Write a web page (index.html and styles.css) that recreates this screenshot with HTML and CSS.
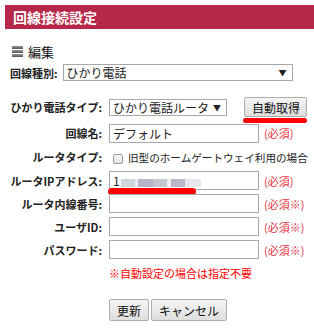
FILE: index.html
```html
<!DOCTYPE html>
<html lang="ja">
<head>
    <meta charset="UTF-8">
    <title>回線接続設定</title>
    <link rel="stylesheet" href="styles.css">
</head>
<body>
<h2 class="title">回線接続設定</h2>

<div class="section">
    <span class="icon"><i></i><i></i><i></i></span>編集
</div>

<div class="line-type">
    <label>回線種別:</label>
    <div class="select wide">ひかり電話<span class="arrow">▼</span></div>
</div>

<table class="form">
    <tr class="first">
        <th>ひかり電話タイプ:</th>
        <td>
            <div class="select small">ひかり電話ルータ<span class="arrow">▼</span></div>
            <span class="auto-wrap"><button type="button" class="btn auto">自動取得</button><span class="mark"></span></span>
        </td>
    </tr>
    <tr class="tall">
        <th>回線名:</th>
        <td><div class="input">デフォルト</div><span class="req">(必須)</span></td>
    </tr>
    <tr class="tall">
        <th>ルータタイプ:</th>
        <td class="check"><span class="box"></span>旧型のホームゲートウェイ利用の場合</td>
    </tr>
    <tr>
        <th>ルータIPアドレス:</th>
        <td>
            <div class="input ip">1<span class="blur"></span><span class="mark ip-mark"></span></div><span class="req">(必須)</span>
        </td>
    </tr>
    <tr>
        <th>ルータ内線番号:</th>
        <td><div class="input"></div><span class="req">(必須※)</span></td>
    </tr>
    <tr>
        <th>ユーザID:</th>
        <td><div class="input"></div><span class="req">(必須※)</span></td>
    </tr>
    <tr>
        <th>パスワード:</th>
        <td><div class="input"></div><span class="req">(必須※)</span></td>
    </tr>
    <tr>
        <th></th>
        <td class="note">※自動設定の場合は指定不要</td>
    </tr>
</table>

<div class="actions">
    <button type="button" class="btn">更新</button>
    <button type="button" class="btn">キャンセル</button>
</div>
</body>
</html>
```

FILE: styles.css
```css
body {
    margin: 0;
    padding: 5px 0 0 5px;
    background-color: #fff;
    font-family: "Noto Sans CJK JP", "Liberation Sans", sans-serif;
    font-size: 11px;
    color: #222;
}
.title {
    margin: 0;
    height: 24px;
    line-height: 24px;
    padding-left: 8px;
    background-color: #b7274a;
    color: #fff;
    font-size: 14px;
    font-weight: bold;
}
.section {
    display: flex;
    align-items: center;
    height: 16px;
    margin: 14px 0 0 7px;
    font-size: 13px;
    color: #111;
}
.icon {
    display: flex;
    flex-direction: column;
    gap: 1px;
    width: 11px;
    margin-right: 5px;
}
.icon i {
    display: block;
    height: 3px;
    background: linear-gradient(#999, #555);
}
.line-type {
    display: flex;
    align-items: center;
    margin: 5px 0 0 5px;
}
.line-type label {
    font-weight: bold;
    margin-right: 5px;
}
.select {
    position: relative;
    box-sizing: border-box;
    height: 17px;
    line-height: 15px;
    border: 1px solid #a9a9a9;
    padding-left: 3px;
    background: #fff;
    font-size: 12px;
}
.select .arrow {
    position: absolute;
    right: 5px;
    top: 0;
    font-size: 8px;
}
.wide {
    width: 230px;
}
.small {
    width: 118px;
}
.form {
    border-collapse: collapse;
    margin-top: 12px;
}
.form tr {
    height: 23px;
}
.form tr.first {
    height: 28px;
}
.form tr.tall {
    height: 24px;
}
.form th {
    width: 97px;
    padding: 0 7px 0 0;
    text-align: right;
    font-weight: bold;
    white-space: nowrap;
}
.form td {
    padding: 0;
    white-space: nowrap;
}
.form td > * {
    vertical-align: middle;
}
.form td .select {
    display: inline-block;
}
.auto-wrap {
    position: relative;
    display: inline-block;
    margin-left: 15px;
}
.btn {
    font-family: "Noto Sans CJK JP", "Liberation Sans", sans-serif;
    font-size: 12px;
    height: 20px;
    padding: 0 6px;
    border: 1px solid #adadad;
    border-radius: 2px;
    background: linear-gradient(#f4f4f4, #dedede);
    color: #111;
    vertical-align: middle;
}
.auto {
    width: 63px;
    display: block;
}
.mark {
    position: absolute;
    left: -1px;
    top: 21px;
    width: 64px;
    height: 5px;
    border-radius: 3px;
    background-color: #f00;
}
.input {
    position: relative;
    display: inline-block;
    box-sizing: border-box;
    width: 150px;
    height: 19px;
    line-height: 17px;
    border: 1px solid #a9a9a9;
    padding-left: 3px;
    background: #fff;
    font-size: 12px;
}
.ip .blur {
    display: inline-block;
    width: 80px;
    height: 8px;
    margin-left: 1px;
    vertical-align: middle;
    background: linear-gradient(90deg, #cfd6de 0 17%, #eceef2 17% 21%, #bbb3c8 21% 40%, #c4c8d0 40% 58%, #eceef2 58% 63%, #bdb6c8 63% 80%, #e6e6ec 80%);
}
.ip-mark {
    left: -2px;
    top: 16px;
    width: 88px;
    height: 7px;
    border-radius: 4px;
}
.req {
    margin-left: 5px;
    color: #e6303e;
}
.check {
    font-size: 10.6px;
}
.check .box {
    display: inline-block;
    box-sizing: border-box;
    width: 10px;
    height: 10px;
    margin: 0 5px 0 4px;
    border: 1px solid #9a9a9a;
    border-radius: 2px;
    background: linear-gradient(#f6f6f6, #e2e2e2);
}
.note {
    color: #f00;
}
.actions {
    display: flex;
    gap: 2px;
    margin: 15px 0 0 104px;
}
.actions .btn {
    height: 22px;
    padding: 0 7px;
}
```
